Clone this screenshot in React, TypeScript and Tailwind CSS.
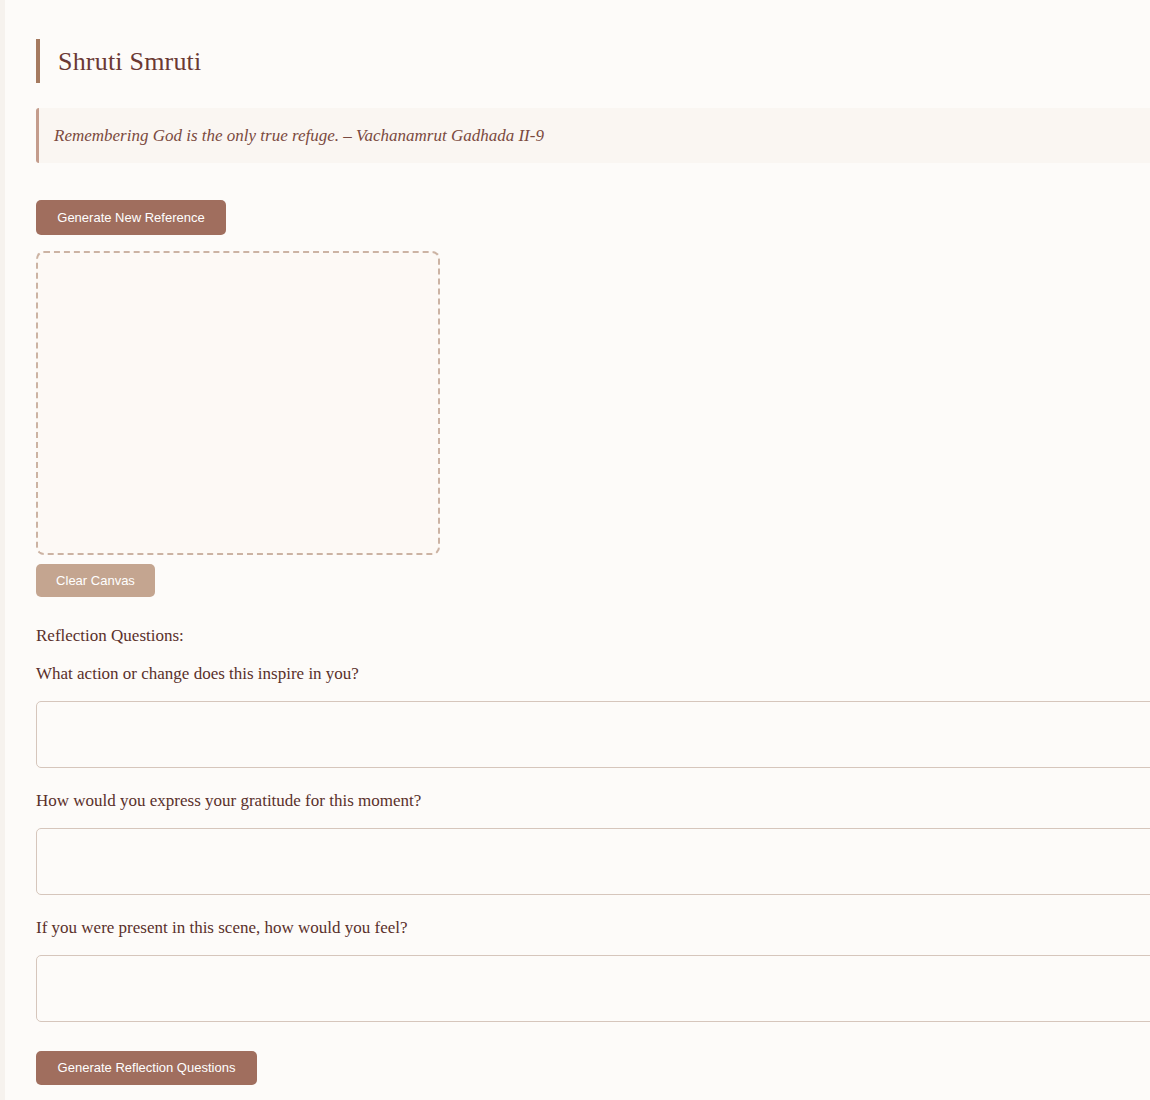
import React from "react";

const questions = [
  "What action or change does this inspire in you?",
  "How would you express your gratitude for this moment?",
  "If you were present in this scene, how would you feel?",
];

export default function App() {
  return (
    <div className="min-h-screen w-full overflow-hidden bg-[#fdfbf9] border-l-[5px] border-[#f6f2ee] font-['Liberation_Serif',serif] text-[#5a302b]">
      <div className="w-[1180px] pl-[31px] pt-[39px] pb-4">
        <div className="border-l-4 border-[#a57a60] pl-[18px] h-[44px] flex items-center">
          <h1 className="text-[26px] text-[#6b3934] tracking-[0.2px]">Shruti Smruti</h1>
        </div>

        <div className="mt-[25px] h-[55px] flex items-center bg-[#faf6f2] border-l-[3px] border-[#c49c8c] rounded-l-[3px] pl-[15px]">
          <p className="italic text-[17px] text-[#7a4a40]">
            Remembering God is the only true refuge. – Vachanamrut Gadhada II-9
          </p>
        </div>

        <button className="mt-[37px] h-[35px] w-[190px] rounded-[5px] bg-[#a06e5e] text-white text-[13px] font-['Liberation_Sans',Arial,sans-serif]">
          Generate New Reference
        </button>

        <div className="mt-[16px] w-[404px] h-[304px] border-2 border-dashed border-[#ccb3a3] rounded-[8px] bg-[#fdf9f5]" />

        <button className="mt-[9px] block h-[33px] w-[119px] rounded-[5px] bg-[#c4a590] text-white text-[13px] font-['Liberation_Sans',Arial,sans-serif]">
          Clear Canvas
        </button>

        <div className="mt-[29px] text-[17px] leading-5">Reflection Questions:</div>

        {questions.map((q, i) => (
          <div key={q} className={i === 0 ? "mt-[18px]" : "mt-[23px]"}>
            <label className="block text-[17px] leading-5">{q}</label>
            <textarea className="mt-[17px] block w-full h-[67px] border border-[#d6c6bc] rounded-[5px] bg-[#fdfbf9] resize-none outline-none" />
          </div>
        ))}

        <button className="mt-[29px] h-[34px] w-[221px] rounded-[5px] bg-[#a06e5e] text-white text-[13px] font-['Liberation_Sans',Arial,sans-serif]">
          Generate Reflection Questions
        </button>
      </div>
    </div>
  );
}
